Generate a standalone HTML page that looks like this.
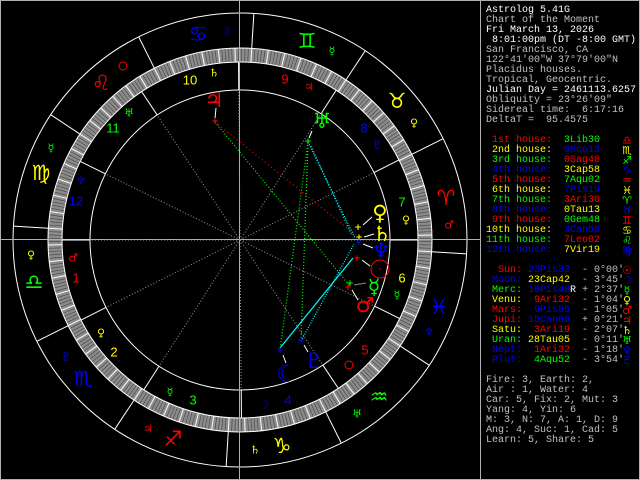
<!DOCTYPE html>
<html><head><meta charset="utf-8">
<style>
html,body{margin:0;padding:0;background:#000;}
#w{position:relative;width:640px;height:480px;overflow:hidden;background:#000;}
.t{position:absolute;left:486px;font-family:"Liberation Mono",monospace;font-size:10px;line-height:10px;white-space:pre;color:#c0c0c0;}
.w{color:#fff}.r{color:#ff0000}.y{color:#ffff00}.g{color:#00ff00}.b{color:#0000ff}.s{color:#c0c0c0}
.gl{position:absolute;left:621px;width:12px;text-align:center;font-family:"DejaVu Sans",sans-serif;font-size:11px;line-height:10px;}
svg text{font-family:"DejaVu Sans",sans-serif;}
</style></head><body><div id="w">
<svg id="ch" width="640" height="480" style="position:absolute;left:0;top:0">
<rect x="0.5" y="0.5" width="639" height="479" fill="none" stroke="#b0b0b0"/>
<line x1="480.5" y1="0" x2="480.5" y2="480" stroke="#b0b0b0"/>
<g id="ticks"></g>
<circle cx="240" cy="240" r="227" fill="none" stroke="#fff"/>
<circle cx="240" cy="240" r="192" fill="none" stroke="#fff"/>
<circle cx="240" cy="240" r="178" fill="none" stroke="#fff"/>
<circle cx="240" cy="240" r="150" fill="none" stroke="#fff"/>
<line x1="0" y1="239.5" x2="480" y2="239.5" stroke="#b0b0b0"/>
<line x1="239.5" y1="0" x2="239.5" y2="480" stroke="#b0b0b0"/>
<g id="lines"></g>
<g fill="none" stroke-width="1.2">
<line x1="215" y1="122" x2="349" y2="285" stroke="#00ff00" stroke-dasharray="1 2"/>
<line x1="215" y1="122" x2="357" y2="236" stroke="#ff0000" stroke-dasharray="1 3"/>
<line x1="308" y1="142" x2="280" y2="350" stroke="#00ff00" stroke-dasharray="1 2"/>
<line x1="308" y1="142" x2="301" y2="341" stroke="#00ff00" stroke-dasharray="1 2"/>
<line x1="308" y1="142" x2="355" y2="238" stroke="#00ffff" stroke-dasharray="1 1.5"/>
<line x1="311" y1="146" x2="352" y2="236" stroke="#00ffff" stroke-dasharray="1 2"/>
<line x1="280" y1="348" x2="353" y2="258" stroke="#00ffff"/>
<line x1="301" y1="341" x2="354" y2="244" stroke="#00ffff" stroke-dasharray="1 1.5"/>
</g>
<g font-size="9" text-anchor="middle" dominant-baseline="central" font-weight="bold">
<text x="215" y="122" fill="#ff0000">+</text>
<text x="308" y="142" fill="#00ff00">+</text>
<text x="301" y="341" fill="#0000ff">+</text>
<text x="280" y="351" fill="#0000ff">+</text>
<text x="358" y="228" fill="#ffff00">+</text>
<text x="359" y="238" fill="#ffff00">+</text>
<text x="359" y="243" fill="#0000ff">+</text>
<text x="357" y="259" fill="#ff0000">+</text>
<text x="350" y="284" fill="#00ff00">+</text>
<text x="348" y="288" fill="#ff0000">+</text>
</g>
<g stroke="#fff" stroke-width="1">
<line x1="216" y1="108" x2="215" y2="118"/>
<line x1="312" y1="131" x2="309" y2="138"/>
<line x1="363" y1="225" x2="372" y2="217"/>
<line x1="364" y1="237" x2="374" y2="234"/>
<line x1="363" y1="244" x2="373" y2="248"/>
<line x1="362" y1="260" x2="370" y2="266"/>
<line x1="354" y1="285" x2="366" y2="283" stroke="#888"/>
<line x1="352" y1="290" x2="358" y2="300"/>
<line x1="304" y1="345" x2="308" y2="352"/>
<line x1="283" y1="355" x2="286" y2="363"/>
</g>
<g text-anchor="middle" dominant-baseline="central" font-size="21">
<text x="214" y="100" fill="#ff0000">♃</text>
<text x="322" y="121" fill="#00ff00">♅</text>
<text x="380" y="213" fill="#ffff00">♀</text>
<text x="382" y="234" fill="#ffff00">♄</text>
<text x="381" y="251" fill="#0000ff">♆</text>
<text x="374" y="287" fill="#00ff00">☿</text>
<text x="365" y="305" fill="#ff0000">♂</text>
<text x="314" y="361" fill="#0000ff">♇</text>
<text x="287" y="374" fill="#0000ff" font-size="24">☾</text>
</g>
<circle cx="380" cy="269" r="9" fill="none" stroke="#ff0000"/>
<circle cx="380" cy="269" r="0.8" fill="#ff0000"/>
<g text-anchor="middle" dominant-baseline="central" font-size="21">
<text x="446" y="198" fill="#ff0000">♈&#xFE0E;</text>
<text x="397" y="101" fill="#ffff00">♉&#xFE0E;</text>
<text x="307" y="41" fill="#00ff00">♊&#xFE0E;</text>
<text x="198" y="34" fill="#0000ff">♋&#xFE0E;</text>
<text x="101" y="83" fill="#ff0000">♌&#xFE0E;</text>
<text x="41" y="173" fill="#ffff00">♍&#xFE0E;</text>
<text x="34" y="282" fill="#00ff00">♎&#xFE0E;</text>
<text x="83" y="379" fill="#0000ff">♏&#xFE0E;</text>
<text x="173" y="439" fill="#ff0000">♐&#xFE0E;</text>
<text x="282" y="446" fill="#ffff00">♑&#xFE0E;</text>
<text x="379" y="397" fill="#00ff00">♒&#xFE0E;</text>
<text x="439" y="307" fill="#0000ff">♓&#xFE0E;</text>
</g>
<g text-anchor="middle" dominant-baseline="central" font-size="11">
<text x="449" y="225" fill="#ff0000">♂</text>
<text x="414" y="123" fill="#ffff00">♀</text>
<text x="332" y="51" fill="#00ff00">☿</text>
<text x="225" y="31" fill="#0000ff">☽</text>
<circle cx="123" cy="66" r="4" fill="none" stroke="#ff0000"/>
<text x="51" y="148" fill="#00ff00">☿</text>
<text x="31" y="255" fill="#ffff00">♀</text>
<text x="66" y="357" fill="#0000ff">♇</text>
<text x="148" y="429" fill="#ff0000">♃</text>
<text x="255" y="450" fill="#ffff00">♄</text>
<text x="357" y="414" fill="#00ff00">♅</text>
<text x="429" y="332" fill="#0000ff">♆</text>
</g>
<g text-anchor="middle" dominant-baseline="central" font-size="13">
<text x="190" y="80" fill="#ffff00" style="font-family:'Liberation Sans',sans-serif">10</text>
<text x="113" y="128" fill="#00ff00" style="font-family:'Liberation Sans',sans-serif">11</text>
<text x="76" y="201" fill="#0000ff" style="font-family:'Liberation Sans',sans-serif">12</text>
<text x="76" y="278" fill="#ff0000" style="font-family:'Liberation Sans',sans-serif">1</text>
<text x="114" y="352" fill="#ffff00" style="font-family:'Liberation Sans',sans-serif">2</text>
<text x="193" y="400" fill="#00ff00" style="font-family:'Liberation Sans',sans-serif">3</text>
<text x="288" y="400" fill="#0000ff" style="font-family:'Liberation Sans',sans-serif">4</text>
<text x="365" y="350" fill="#ff0000" style="font-family:'Liberation Sans',sans-serif">5</text>
<text x="402" y="278" fill="#ffff00" style="font-family:'Liberation Sans',sans-serif">6</text>
<text x="402" y="202" fill="#00ff00" style="font-family:'Liberation Sans',sans-serif">7</text>
<text x="364" y="128" fill="#0000ff" style="font-family:'Liberation Sans',sans-serif">8</text>
<text x="285" y="79" fill="#ff0000" style="font-family:'Liberation Sans',sans-serif">9</text>
</g>
<g text-anchor="middle" dominant-baseline="central" font-size="11">
<text x="214" y="73" fill="#ffff00">♄</text>
<text x="129" y="113" fill="#00ff00">♅</text>
<text x="81" y="181" fill="#0000ff">♆</text>
<text x="73" y="258" fill="#ff0000">♂</text>
<text x="101" y="333" fill="#ffff00">♀</text>
<text x="170" y="392" fill="#00ff00">☿</text>
<text x="264" y="405" fill="#0000ff">☽</text>
<circle cx="349" cy="365" r="4" fill="none" stroke="#ff0000"/>
<text x="397" y="295" fill="#00ff00">☿</text>
<text x="406" y="220" fill="#ffff00">♀</text>
<text x="377" y="145" fill="#0000ff">♇</text>
<text x="309" y="87" fill="#ff0000">♃</text>
</g>
</svg>
<script>
(function(){
var ns="http://www.w3.org/2000/svg",cx=240,cy=240;
function P(r,t){t=t*Math.PI/180;return [cx+r*Math.cos(t),cy-r*Math.sin(t)];}
function L(g,r1,r2,t,col,w,da){var a=P(r1,t),b=P(r2,t),l=document.createElementNS(ns,"line");
l.setAttribute("x1",a[0]);l.setAttribute("y1",a[1]);l.setAttribute("x2",b[0]);l.setAttribute("y2",b[1]);
l.setAttribute("stroke",col);l.setAttribute("stroke-width",w);if(da)l.setAttribute("stroke-dasharray",da);g.appendChild(l);}
var tk=document.getElementById("ticks"),ln=document.getElementById("lines");
var c=document.createElementNS(ns,"circle");c.setAttribute("cx",cx);c.setAttribute("cy",cy);c.setAttribute("r",185);
c.setAttribute("fill","none");c.setAttribute("stroke","#8a8a8a");c.setAttribute("stroke-width",14);tk.appendChild(c);
for(var d=0;d<360;d++){var t=d-3.5;if(d%5==0)L(tk,178,192,t,"#fff",1);else L(tk,178,192,t,"#444",0.6);}
for(var k=0;k<12;k++)L(ln,192,227,30*k-3.5,"#fff",1);
var cusps=[183.5,210.22,240.8,273.97,307.03,337.32,3.5,30.22,60.8,93.97,127.03,157.32];
cusps.forEach(function(l){L(ln,150,178,l-3.5,"#fff",1);L(ln,0,150,l-3.5,"#999",1,"1 2");});
})();
</script>
<div class="t" style="top:6px"><span class="w">Astrolog 5.41G</span>
Chart of the Moment
<span class="w">Fri March 13, 2026</span>
<span class="w"> 8:01:00pm (DT -8:00 GMT)</span>
San Francisco, CA
122°41'00"W 37°79'00"N
Placidus houses.
Tropical, Geocentric.
<span class="w">Julian Day = 2461113.6257</span>
Obliquity = 23°26'09"
Sidereal time:  6:17:16
DeltaT =  95.4575

<span class="r"> 1st house:</span>  <span class="g">3Lib30</span>
<span class="y"> 2nd house:</span>  <span class="b">0Sco13</span>
<span class="g"> 3rd house:</span>  <span class="r">0Sag48</span>
<span class="b"> 4th house:</span>  <span class="y">3Cap58</span>
<span class="r"> 5th house:</span>  <span class="g">7Aqu02</span>
<span class="y"> 6th house:</span>  <span class="b">7Pis19</span>
<span class="g"> 7th house:</span>  <span class="r">3Ari30</span>
<span class="b"> 8th house:</span>  <span class="y">0Tau13</span>
<span class="r"> 9th house:</span>  <span class="g">0Gem48</span>
<span class="y">10th house:</span>  <span class="b">3Can58</span>
<span class="g">11th house:</span>  <span class="r">7Leo02</span>
<span class="b">12th house:</span>  <span class="y">7Vir19</span>

<span class="r">  Sun:</span> <span class="b">23Pis32</span>  - 0°00'
<span class="b"> Moon:</span> <span class="y">23Cap42</span>  - 3°45'
<span class="g"> Merc:</span> <span class="b">10Pis48</span><span class="w">R</span> + 2°37'
<span class="y"> Venu:</span> <span class="r"> 9Ari32</span>  - 1°04'
<span class="r"> Mars:</span> <span class="b"> 9Pis05</span>  - 1°05'
<span class="r"> Jupi:</span> <span class="b">15Can06</span>  + 0°21'
<span class="y"> Satu:</span> <span class="r"> 3Ari19</span>  - 2°07'
<span class="g"> Uran:</span> <span class="y">28Tau05</span>  - 0°11'
<span class="b"> Nept:</span> <span class="r"> 1Ari32</span>  - 1°18'
<span class="b"> Plut:</span> <span class="g"> 4Aqu52</span>  - 3°54'

Fire: 3, Earth: 2,
Air : 1, Water: 4
Car: 5, Fix: 2, Mut: 3
Yang: 4, Yin: 6
M: 3, N: 7, A: 1, D: 9
Ang: 4, Suc: 1, Cad: 5
Learn: 5, Share: 5</div>
<div class="gl r" style="top:136px">♎&#xFE0E;</div>
<div class="gl y" style="top:146px">♏&#xFE0E;</div>
<div class="gl g" style="top:156px">♐&#xFE0E;</div>
<div class="gl b" style="top:166px">♑&#xFE0E;</div>
<div class="gl r" style="top:176px">♒&#xFE0E;</div>
<div class="gl y" style="top:186px">♓&#xFE0E;</div>
<div class="gl g" style="top:196px">♈&#xFE0E;</div>
<div class="gl b" style="top:206px">♉&#xFE0E;</div>
<div class="gl r" style="top:216px">♊&#xFE0E;</div>
<div class="gl y" style="top:226px">♋&#xFE0E;</div>
<div class="gl g" style="top:236px">♌&#xFE0E;</div>
<div class="gl b" style="top:246px">♍&#xFE0E;</div>
<div class="gl r" style="top:266px">☉</div>
<div class="gl b" style="top:276px">☽</div>
<div class="gl g" style="top:286px">☿</div>
<div class="gl y" style="top:296px">♀</div>
<div class="gl r" style="top:306px">♂</div>
<div class="gl r" style="top:316px">♃</div>
<div class="gl y" style="top:326px">♄</div>
<div class="gl g" style="top:336px">♅</div>
<div class="gl b" style="top:346px">♆</div>
<div class="gl b" style="top:356px">♇</div>
</div></body></html>
